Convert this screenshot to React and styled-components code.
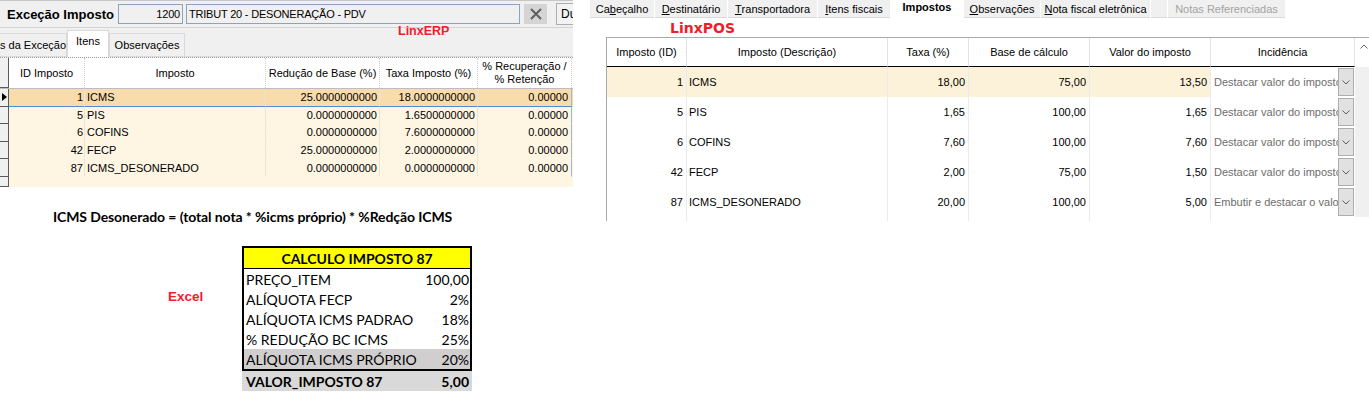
import React from 'react';
import styled, { createGlobalStyle } from 'styled-components';

const Global = createGlobalStyle`
  html, body { margin: 0; padding: 0; background: #fff; }
  body { font-family: "Liberation Sans", Arial, sans-serif; color: #000; }
  * { box-sizing: border-box; }
`;

const Page = styled.div`
  display: flex;
  width: 1369px;
  height: 393px;
  overflow: hidden;
  background: #fff;
`;

const LeftCol = styled.div`
  width: 587px;
  flex: none;
  display: flex;
  flex-direction: column;
`;

const RightCol = styled.div`
  position: relative;
  flex: 1;
  min-width: 0;
  overflow: hidden;
  display: flex;
  flex-direction: column;
`;

const Annotation = styled.div`
  position: absolute;
  left: ${p => p.$left}px;
  top: ${p => p.$top}px;
  color: #ee1d2a;
  font-family: ${p => p.$dejavu ? '"DejaVu Sans", sans-serif' : '"Liberation Sans", Arial, sans-serif'};
  font-weight: bold;
  font-size: ${p => p.$size}px;
  line-height: 1;
  white-space: nowrap;
`;

/* ---------------- ERP ---------------- */
const ErpWindow = styled.div`
  position: relative;
  width: 573px;
  height: 187px;
  background: #f0f0f0;
  overflow: hidden;
  display: flex;
  flex-direction: column;
  font-size: 11px;
`;

const ErpTopBar = styled.div`
  height: 28px;
  flex: none;
  display: flex;
  align-items: center;
  padding-left: 7px;
  border-top: 1px solid #c6c6c6;
  border-bottom: 1px solid #d4d4d4;
  white-space: nowrap;
`;

const ErpTitle = styled.div`
  width: 111px;
  flex: none;
  font-weight: bold;
  font-size: 13px;
`;

const ErpInput = styled.div`
  width: ${p => p.$w}px;
  height: 20px;
  flex: none;
  margin-right: ${p => p.$mr}px;
  border: 1px solid #8ba3bf;
  background: #f0f0f0;
  display: flex;
  align-items: center;
  justify-content: ${p => p.$align === 'right' ? 'flex-end' : 'flex-start'};
  padding: 0 2px;
  font-size: 11px;
  letter-spacing: -0.2px;
`;

const ClearButton = styled.div`
  width: 23px;
  height: 20px;
  flex: none;
  margin-right: 9px;
  background: #d4d4d4;
  display: flex;
  align-items: center;
  justify-content: center;
`;

const DuButton = styled.div`
  width: 34px;
  height: 22px;
  flex: none;
  border: 1px solid #adadad;
  background: #f3f3f3;
  display: flex;
  align-items: center;
  padding-left: 4px;
  font-size: 12px;
`;

const ErpTabs = styled.div`
  height: 29px;
  flex: none;
  display: flex;
  align-items: flex-end;
  border-bottom: 1px solid #d9d9d9;
`;

const ErpTab = styled.div`
  width: ${p => p.$w}px;
  height: ${p => p.$active ? 27 : 23}px;
  margin-bottom: ${p => p.$active ? -1 : 0}px;
  background: ${p => p.$active ? '#fff' : '#f0f0f0'};
  border: 1px solid #d9d9d9;
  border-bottom: none;
  border-left: ${p => p.$cut ? 'none' : '1px solid #d9d9d9'};
  display: flex;
  align-items: ${p => p.$active ? 'flex-start' : 'center'};
  padding-top: ${p => p.$active ? 4 : 0}px;
  justify-content: ${p => p.$cut ? 'flex-start' : 'center'};
  font-size: 11px;
  white-space: nowrap;
  overflow: hidden;
`;

const ErpGrid = styled.div`
  flex: 1;
  border-top: 1px dotted #9a9a9a;
  display: flex;
  flex-direction: column;
  background: #fff;
`;

const ErpHeadRow = styled.div`
  height: 31px;
  flex: none;
  display: flex;
  background: #fff;
  border-bottom: 1px solid #bdbdbd;
`;

const ErpRowHead = styled.div`
  width: 9px;
  flex: none;
  background: #f0f0f0;
  border-right: 1px solid #5a5a5a;
  border-bottom: 1px solid #5a5a5a;
  display: flex;
  align-items: center;
  justify-content: center;
`;

const ErpHeadCell = styled.div`
  width: ${p => p.$w}px;
  flex: none;
  border-right: 1px dotted #cfcfcf;
  display: flex;
  align-items: center;
  justify-content: center;
  text-align: center;
  font-size: 11px;
  line-height: 13px;
  white-space: nowrap;
`;

const ErpRow = styled.div`
  height: 17.6px;
  flex: none;
  display: flex;
  background: ${p => p.$selected ? '#f8dcab' : '#fef5e3'};
`;

const ErpCell = styled.div`
  width: ${p => p.$w}px;
  flex: none;
  display: flex;
  align-items: center;
  justify-content: ${p => p.$align === 'left' ? 'flex-start' : 'flex-end'};
  padding: 0 ${p => p.$pr ?? 2}px 0 ${p => p.$align === 'left' ? 2 : 0}px;
  border-right: 1px solid ${p => p.$last ? '#9db7d3' : '#ece3d0'};
  border-bottom: 1px solid ${p => p.$selected ? '#4d8fd1' : 'transparent'};
  font-size: 11px;
  white-space: nowrap;
  overflow: hidden;
`;

const ErpFiller = styled.div`
  flex: 1;
  display: flex;
  background: #fef5e3;
`;

/* ---------------- Formula / Excel ---------------- */
const Formula = styled.div`
  padding: 20px 0 0 53px;
  height: 40px;
  flex: none;
  line-height: 20px;
  font-family: Lato, "Open Sans", sans-serif;
  font-weight: bold;
  font-size: 14px;
  letter-spacing: -0.1px;
  white-space: nowrap;
  color: #000;
`;

const ExcelArea = styled.div`
  display: flex;
  padding: 19px 0 0 168px;
`;

const ExcelLabel = styled.div`
  width: 74px;
  flex: none;
  padding-top: 44px;
  color: #ee1d2a;
  font-weight: bold;
  font-size: 13.5px;
  line-height: 14px;
`;

const ExcelBlock = styled.div`
  width: 230px;
  flex: none;
  display: flex;
  flex-direction: column;
  font-family: Lato, "Open Sans", sans-serif;
  font-size: 14px;
`;

const ExcelTable = styled.div`
  border: 2px solid #000;
  display: flex;
  flex-direction: column;
`;

const ExcelHeader = styled.div`
  height: 21px;
  background: #ffff00;
  border-bottom: 1px solid #000;
  display: flex;
  align-items: center;
  justify-content: center;
  font-weight: bold;
`;

const ExcelRow = styled.div`
  height: 20px;
  display: flex;
  align-items: center;
  justify-content: space-between;
  padding: 0 1px 0 2px;
  background: ${p => p.$shade ? '#d0cece' : '#fff'};
  font-weight: ${p => p.$bold ? 'bold' : 'normal'};
`;

const ExcelTotal = styled(ExcelRow)`
  height: 20px;
  background: #d9d9d9;
  font-weight: bold;
  padding: 0 3px 0 4px;
`;

/* ---------------- POS ---------------- */
const PosTabs = styled.div`
  height: 18px;
  flex: none;
  display: flex;
  gap: 1px;
  padding-left: 3px;
  font-size: 11px;
`;

const PosTab = styled.div`
  width: ${p => p.$w}px;
  flex: none;
  background: ${p => p.$active ? '#fff' : '#f0f0f0'};
  border-bottom: 1px solid ${p => p.$active ? '#fff' : '#dadada'};
  color: ${p => p.$disabled ? '#a3a3a3' : '#000'};
  font-weight: ${p => p.$active ? 'bold' : 'normal'};
  display: flex;
  align-items: ${p => p.$active ? 'flex-start' : 'center'};
  padding-top: ${p => p.$active ? 1 : 0}px;
  justify-content: center;
  white-space: nowrap;
`;

const Accel = styled.span`
  text-decoration: underline;
`;

const PosGrid = styled.div`
  margin: 19px 0 0 19px;
  height: 184px;
  border-left: 1px solid #a8a8a8;
  display: flex;
  flex-direction: column;
  font-size: 11px;
`;

const PosHeadRow = styled.div`
  height: 30px;
  flex: none;
  display: flex;
  border-top: 1px solid #a8a8a8;
`;

const PosHeadCell = styled.div`
  width: ${p => p.$w}px;
  flex: none;
  border-right: 1px solid #e3e3e3;
  border-bottom: 1px solid #000;
  display: flex;
  align-items: center;
  justify-content: center;
  white-space: nowrap;
`;

const ScrollHead = styled.div`
  width: 17px;
  flex: none;
  display: flex;
  justify-content: center;
  padding-top: 6px;
`;

const PosRow = styled.div`
  height: 30px;
  flex: none;
  display: flex;
`;

const PosCell = styled.div`
  width: ${p => p.$w}px;
  flex: none;
  background: ${p => p.$selected ? '#fcf1d9' : '#fff'};
  border-right: 1px solid #ebebeb;
  display: flex;
  align-items: center;
  justify-content: ${p => p.$align === 'left' ? 'flex-start' : 'flex-end'};
  padding: 0 ${p => p.$align === 'left' ? 0 : 3}px 0 ${p => p.$align === 'left' ? 2 : 0}px;
  white-space: nowrap;
  overflow: hidden;
`;

const IncCell = styled.div`
  width: 144px;
  flex: none;
  background: #fff;
  display: flex;
  align-items: center;
  padding: 1px 1px 1px 3px;
`;

const IncText = styled.div`
  flex: 1;
  min-width: 0;
  overflow: hidden;
  white-space: nowrap;
  color: #6d6d6d;
`;

const DropButton = styled.div`
  width: 16px;
  height: 28px;
  flex: none;
  background: #e1e1e1;
  border: 1px solid #adadad;
  display: flex;
  align-items: center;
  justify-content: center;
`;

const ScrollTrack = styled.div`
  width: 17px;
  flex: none;
  background: #f0f0f0;
`;

const PosFiller = styled.div`
  flex: 1;
  display: flex;
`;

const FillerCell = styled.div`
  width: ${p => p.$w}px;
  flex: none;
  border-right: 1px solid #ebebeb;
`;

const Chevron = ({ up }) => (
  <svg width="8" height="5" viewBox="0 0 8 5">
    <path d={up ? 'M0.5 4.5 L4 1 L7.5 4.5' : 'M0.5 0.5 L4 4 L7.5 0.5'} fill="none" stroke="#606060" strokeWidth="1" />
  </svg>
);

const erpCols = [76, 181, 114, 98, 94];
const erpRows = [
  ['1', 'ICMS', '25.0000000000', '18.0000000000', '0.00000'],
  ['5', 'PIS', '0.0000000000', '1.6500000000', '0.00000'],
  ['6', 'COFINS', '0.0000000000', '7.6000000000', '0.00000'],
  ['42', 'FECP', '25.0000000000', '2.0000000000', '0.00000'],
  ['87', 'ICMS_DESONERADO', '0.0000000000', '0.0000000000', '0.00000'],
];

const posCols = [80, 201, 81, 121, 121];
const posRows = [
  ['1', 'ICMS', '18,00', '75,00', '13,50', 'Destacar valor do imposto'],
  ['5', 'PIS', '1,65', '100,00', '1,65', 'Destacar valor do imposto'],
  ['6', 'COFINS', '7,60', '100,00', '7,60', 'Destacar valor do imposto'],
  ['42', 'FECP', '2,00', '75,00', '1,50', 'Destacar valor do imposto'],
  ['87', 'ICMS_DESONERADO', '20,00', '100,00', '5,00', 'Embutir e destacar o valor'],
];

const excelRows = [
  ['PREÇO_ITEM', '100,00'],
  ['ALÍQUOTA FECP', '2%'],
  ['ALÍQUOTA ICMS PADRAO', '18%'],
  ['% REDUÇÃO BC ICMS', '25%'],
  ['ALÍQUOTA ICMS PRÓPRIO', '20%', true],
];

export default function App() {
  return (
    <>
      <Global />
      <Page>
        <LeftCol>
          <ErpWindow>
            <ErpTopBar>
              <ErpTitle>Exceção Imposto</ErpTitle>
              <ErpInput $w={65} $mr={3} $align="right">1200</ErpInput>
              <ErpInput $w={334} $mr={4}>TRIBUT 20 - DESONERAÇÃO - PDV</ErpInput>
              <ClearButton>
                <svg width="12" height="12" viewBox="0 0 12 12">
                  <path d="M1 1 L11 11 M11 1 L1 11" stroke="#5f5f5f" strokeWidth="2" />
                </svg>
              </ClearButton>
              <DuButton>Du</DuButton>
            </ErpTopBar>
            <ErpTabs>
              <ErpTab $w={67} $cut>s da Exceção</ErpTab>
              <ErpTab $w={42} $active>Itens</ErpTab>
              <ErpTab $w={76}>Observações</ErpTab>
            </ErpTabs>
            <ErpGrid>
              <ErpHeadRow>
                <ErpRowHead />
                <ErpHeadCell $w={erpCols[0]}>ID Imposto</ErpHeadCell>
                <ErpHeadCell $w={erpCols[1]}>Imposto</ErpHeadCell>
                <ErpHeadCell $w={erpCols[2]}>Redução de Base (%)</ErpHeadCell>
                <ErpHeadCell $w={erpCols[3]}>Taxa Imposto (%)</ErpHeadCell>
                <ErpHeadCell $w={erpCols[4]}>% Recuperação /<br />% Retenção</ErpHeadCell>
              </ErpHeadRow>
              {erpRows.map((r, i) => (
                <ErpRow key={i} $selected={i === 0}>
                  <ErpRowHead>
                    {i === 0 && (
                      <svg width="5" height="8" viewBox="0 0 5 8"><path d="M0 0 L5 4 L0 8 Z" fill="#000" /></svg>
                    )}
                  </ErpRowHead>
                  <ErpCell $w={erpCols[0]} $pr={1} $selected={i === 0}>{r[0]}</ErpCell>
                  <ErpCell $w={erpCols[1]} $align="left" $selected={i === 0}>{r[1]}</ErpCell>
                  <ErpCell $w={erpCols[2]} $selected={i === 0}>{r[2]}</ErpCell>
                  <ErpCell $w={erpCols[3]} $selected={i === 0}>{r[3]}</ErpCell>
                  <ErpCell $w={erpCols[4]} $pr={3} $last $selected={i === 0}>{r[4]}</ErpCell>
                </ErpRow>
              ))}
              <ErpFiller>
                <ErpRowHead />
              </ErpFiller>
            </ErpGrid>
            <Annotation $left={398} $top={25} $size={12.5}>LinxERP</Annotation>
          </ErpWindow>

          <Formula>ICMS Desonerado = (total nota * %icms próprio) * %Redção ICMS</Formula>

          <ExcelArea>
            <ExcelLabel>Excel</ExcelLabel>
            <ExcelBlock>
              <ExcelTable>
                <ExcelHeader>CALCULO IMPOSTO 87</ExcelHeader>
                {excelRows.map(([k, v, shade]) => (
                  <ExcelRow key={k} $shade={shade}>
                    <span>{k}</span>
                    <span>{v}</span>
                  </ExcelRow>
                ))}
              </ExcelTable>
              <ExcelTotal>
                <span>VALOR_IMPOSTO 87</span>
                <span>5,00</span>
              </ExcelTotal>
            </ExcelBlock>
          </ExcelArea>
        </LeftCol>

        <RightCol>
          <PosTabs>
            <PosTab $w={64}>Ca<Accel>b</Accel>eçalho</PosTab>
            <PosTab $w={72}><Accel>D</Accel>estinatário</PosTab>
            <PosTab $w={89}><Accel>T</Accel>ransportadora</PosTab>
            <PosTab $w={72}><Accel>I</Accel>tens fiscais</PosTab>
            <PosTab $w={72} $active>Impostos</PosTab>
            <PosTab $w={76}><Accel>O</Accel>bservações</PosTab>
            <PosTab $w={109}><Accel>N</Accel>ota fiscal eletrônica</PosTab>
            <PosTab $w={16} />
            <PosTab $w={117} $disabled>Notas Referenciadas</PosTab>
          </PosTabs>
          <PosGrid>
            <PosHeadRow>
              <PosHeadCell $w={posCols[0]}>Imposto (ID)</PosHeadCell>
              <PosHeadCell $w={posCols[1]}>Imposto (Descrição)</PosHeadCell>
              <PosHeadCell $w={posCols[2]}>Taxa (%)</PosHeadCell>
              <PosHeadCell $w={posCols[3]}>Base de cálculo</PosHeadCell>
              <PosHeadCell $w={posCols[4]}>Valor do imposto</PosHeadCell>
              <PosHeadCell $w={144}>Incidência</PosHeadCell>
              <ScrollHead><Chevron up /></ScrollHead>
            </PosHeadRow>
            {posRows.map((r, i) => (
              <PosRow key={i}>
                <PosCell $w={posCols[0]} $selected={i === 0}>{r[0]}</PosCell>
                <PosCell $w={posCols[1]} $align="left" $selected={i === 0}>{r[1]}</PosCell>
                <PosCell $w={posCols[2]} $selected={i === 0}>{r[2]}</PosCell>
                <PosCell $w={posCols[3]} $selected={i === 0}>{r[3]}</PosCell>
                <PosCell $w={posCols[4]} $selected={i === 0}>{r[4]}</PosCell>
                <IncCell>
                  <IncText>{r[5]}</IncText>
                  <DropButton><Chevron /></DropButton>
                </IncCell>
                <ScrollTrack />
              </PosRow>
            ))}
            <PosFiller>
              {posCols.map((w, i) => <FillerCell key={i} $w={w} />)}
            </PosFiller>
          </PosGrid>
          <Annotation $left={83} $top={21} $size={14} $dejavu>LinxPOS</Annotation>
        </RightCol>
      </Page>
    </>
  );
}
